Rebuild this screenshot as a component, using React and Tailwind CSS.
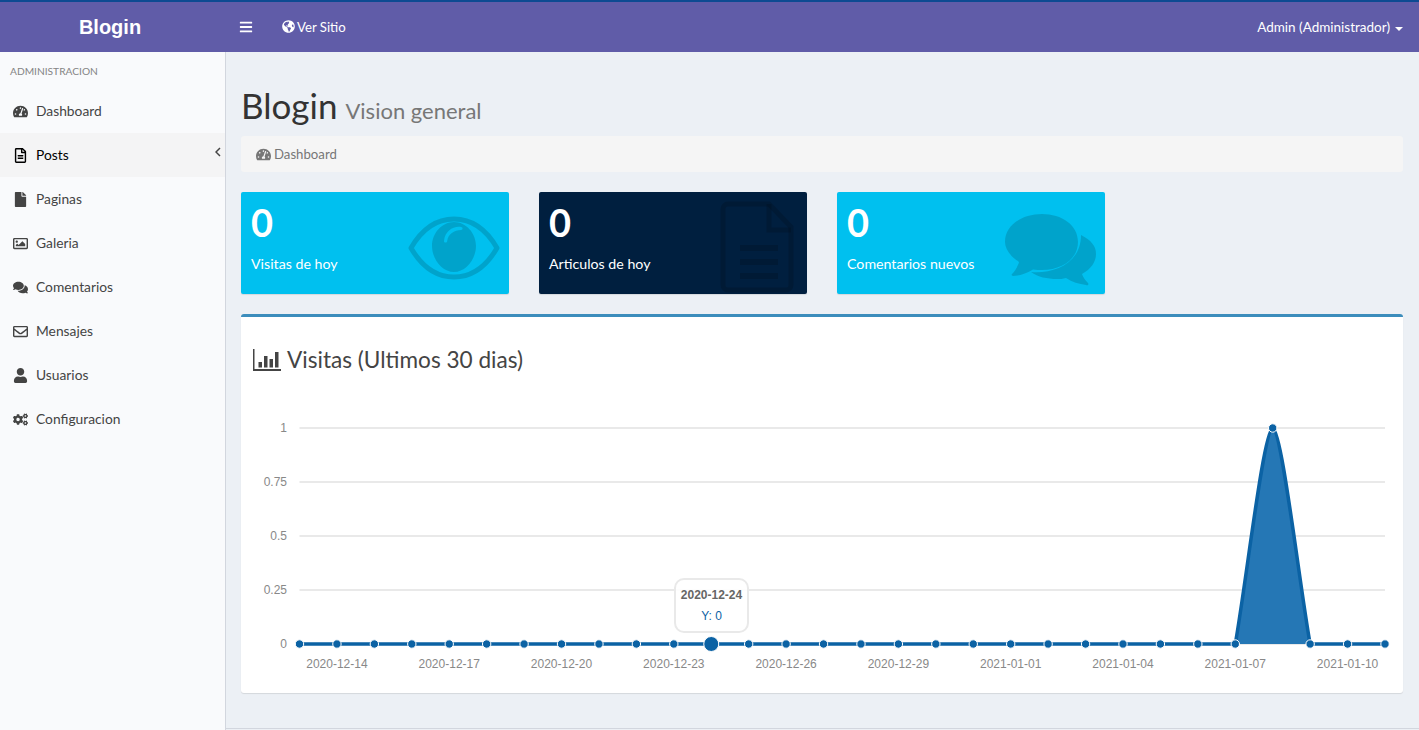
import React from "react";
import { FaTachometerAlt, FaRegFileAlt, FaFile, FaRegImage, FaComments, FaRegEnvelope, FaUser, FaCogs, FaGlobeAmericas, FaBars } from "react-icons/fa";

const nav = [
  ["Dashboard", FaTachometerAlt],
  ["Posts", FaRegFileAlt],
  ["Paginas", FaFile],
  ["Galeria", FaRegImage],
  ["Comentarios", FaComments],
  ["Mensajes", FaRegEnvelope],
  ["Usuarios", FaUser],
  ["Configuracion", FaCogs],
];

const EyeIcon = () => (
  <svg width="92" height="64" viewBox="0 0 92 64" className="absolute left-[167px] top-[24px]">
    <path d="M3 32C14 13 29 3 46 3s32 10 43 29C78 51 63 61 46 61S14 51 3 32Z" fill="none" stroke="#000" strokeOpacity=".15" strokeWidth="5" strokeLinejoin="round" />
    <path fillRule="evenodd" fill="#000" fillOpacity=".15" d="M46 6c12 0 22 11 22 24S58 56 46 56 24 43 24 30 34 6 46 6Zm7 5c-8-1-16 4-17 14-.2 2 3 2 3.200 0 .8-7 7-11 13.800-11 2 0 2-3 0-3Z" />
  </svg>
);
const DocIcon = () => (
  <svg width="74" height="92" viewBox="0 0 74 92" className="absolute left-[181px] top-[9px]" fill="none" stroke="#000" strokeOpacity=".15" strokeWidth="5">
    <path d="M49 3H8a5 5 0 0 0-5 5v76a5 5 0 0 0 5 5h58a5 5 0 0 0 5-5V26L49 3Z" />
    <path d="M49 3v26h22" />
    <path d="M20 47h38M20 61h38M20 75h38" strokeWidth="6" />
  </svg>
);
const ChatIcon = () => (
  <svg width="92" height="72" viewBox="0 0 92 72" className="absolute left-[168px] top-[22px]" fill="#000" fillOpacity=".15">
    <path d="M37 0c20 0 36 11 36 28S57 56 37 56c-3 0-6 0-9-.5C22 59 15 62 8 62c-1 0-2-1-1-2 3-3 6-8 7-12C5 42 0 35 0 28 0 11 17 0 37 0Z" />
    <path d="M76 21c10 5 15 11 15 19 0 8-5 15-14 20 1 3 3 6 6 9 1 1 0 3-2 2-7-1-14-3-20-7-3 1-6 1-9 1-10 0-19-2-26-7 22 2 50-8 50-37Z" />
  </svg>
);
const BarIcon = () => (
  <svg width="28" height="22" viewBox="0 0 28 22" fill="#444">
    <path d="M0 0h1.500v20H28v2H0Z" />
    <path d="M5.500 13h3.500v5.500H5.500ZM11 7h3.500v11.500H11ZM16.500 10h3.500v8.500h-3.500ZM22 3h3.500v15.500H22Z" />
  </svg>
);

const stats = [
  ["Visitas de hoy", "bg-[#00c0ef]", EyeIcon],
  ["Articulos de hoy", "bg-[#001f3f]", DocIcon],
  ["Comentarios nuevos", "bg-[#00c0ef]", ChatIcon],
];

const X0 = 58.5;
const STEP = 37.431;
const px = (i) => X0 + STEP * i;
const Y1 = 51;
const Y0 = 267;
const ticks = [["1", Y1], ["0.75", 105], ["0.5", 159], ["0.25", 213], ["0", Y0]];
const labels = [
  [1, "2020-12-14"], [4, "2020-12-17"], [7, "2020-12-20"], [10, "2020-12-23"], [13, "2020-12-26"],
  [16, "2020-12-29"], [19, "2021-01-01"], [22, "2021-01-04"], [25, "2021-01-07"], [28, "2021-01-10"],
];
const a = px(25), b = px(26), c = px(27);
const peak = `C${a + 11} ${Y0 - 62} ${b - 9} ${Y1 + 1} ${b} ${Y1}C${b + 9} ${Y1 + 1} ${c - 11} ${Y0 - 62} ${c} ${Y0}`;

function Chart() {
  return (
    <svg width="1162" height="316" viewBox="0 0 1162 316" className="block">
      <g style={{ fontFamily: '"Liberation Sans", sans-serif', fontSize: 12 }} fill="#888888">
        {ticks.map(([t, y]) => (
          <g key={t}>
            <line x1={X0} x2={1144} y1={y} y2={y} stroke="#e9e9e9" strokeWidth="2" />
            <text x={46} y={y + 4} textAnchor="end">{t}</text>
          </g>
        ))}
        {labels.map(([i, t]) => (
          <text key={t} x={px(i)} y={291} textAnchor="middle">{t}</text>
        ))}
      </g>
      <path d={`M${a} ${Y0}${peak}Z`} fill="#2577b5" />
      <path d={`M${X0} ${Y0}L${a} ${Y0}${peak}L${px(29)} ${Y0}`} fill="none" stroke="#0b62a4" strokeWidth="3.500" />
      {Array.from({ length: 30 }, (_, i) => (
        <circle key={i} cx={px(i)} cy={i === 26 ? Y1 : Y0} r={i === 11 ? 7.5 : 4.2} fill="#0b62a4" stroke="#fff" strokeWidth="1" />
      ))}
    </svg>
  );
}

export default function App() {
  const sans = { fontFamily: '"Lato", "Noto Sans", sans-serif' };
  return (
    <div className="h-[730px] w-full overflow-hidden bg-[#ecf0f5] flex flex-col" style={sans}>
      <header className="h-[52px] shrink-0 bg-[#605ca8] border-t-2 border-[#0d4a92] flex items-center text-white">
        <div className="w-[220px] text-center text-[20px] font-bold" style={{ fontFamily: '"Liberation Sans", sans-serif' }}>Blogin</div>
        <FaBars className="ml-[19px] text-[14px]" />
        <div className="ml-[29px] flex items-center gap-[2px] text-[13.2px]">
          <FaGlobeAmericas className="text-[13px]" />
          <span className="pt-[1px]">Ver Sitio</span>
        </div>
        <div className="ml-auto mr-4 flex items-center gap-[5px] text-[13.500px]">
          <span>Admin (Administrador)</span>
          <span className="w-0 h-0 border-x-[4px] border-x-transparent border-t-[4px] border-t-white mt-[3px]" />
        </div>
      </header>
      <div className="flex-1 flex min-h-0">
        <aside className="w-[226px] shrink-0 bg-[#f9fafc] border-r border-[#d2d6de]">
          <div className="h-[37px] pl-[10px] pt-[12px] text-[10.200px] leading-[14px] text-[#848484]">ADMINISTRACION</div>
          <nav>
            {nav.map(([label, Icon]) => {
              const active = label === "Posts";
              return (
                <div key={label} className={`h-[44px] flex items-center relative pl-[13px] text-[13.800px] ${active ? "bg-[#f4f4f5] text-black" : "text-[#444444]"}`}>
                  <span className="w-[23px] flex"><Icon className="text-[15px]" /></span>
                  <span>{label}</span>
                  {active && (
                    <svg width="6" height="10" viewBox="0 0 6 10" className="absolute left-[215px] top-[14px]" fill="none" stroke="#444" strokeWidth="1.500">
                      <path d="M5 1 1 5l4 4" />
                    </svg>
                  )}
                </div>
              );
            })}
          </nav>
        </aside>
        <main className="flex-1 min-w-0 pl-[15px] pr-[16px] pt-[31px] border-b border-[#d2d6de] mb-[1px]">
          <h1 className="h-[53px] flex items-baseline text-[35px] leading-[44px] text-[#333333]">
            Blogin
            <small className="ml-2 text-[22px] text-[#777777]">Vision general</small>
          </h1>
          <div className="h-[36px] bg-[#f5f5f5] rounded-[3px] flex items-center pl-[15px] gap-[3px] text-[13.200px] text-[#777777]">
            <FaTachometerAlt className="text-[15px]" />
            <span className="pt-[1px]">Dashboard</span>
          </div>
          <div className="mt-[20px] flex gap-[30px]">
            {stats.map(([label, bg, Icon]) => (
              <div key={label} className={`relative w-[268px] h-[102px] rounded-[2px] text-white pl-[10px] pt-[9px] shadow-[0_1px_1px_rgba(0,0,0,0.1)] ${bg}`}>
                <div className="text-[38px] leading-[42px] font-bold">0</div>
                <div className="mt-[11px] text-[14.200px] leading-[20px]">{label}</div>
                <Icon />
              </div>
            ))}
          </div>
          <section className="relative mt-[20px] h-[379px] bg-white rounded-[3px] border-t-[3px] border-[#3c8dbc] shadow-[0_1px_1px_rgba(0,0,0,0.1)]">
            <div className="pt-[28px] pb-[3px] flex items-center gap-[6px] pl-[12px] text-[#444444] text-[22.600px] leading-[29px]">
              <BarIcon />
              <span>Visitas (Ultimos 30 dias)</span>
            </div>
            <Chart />
            <div className="absolute left-[433px] top-[261px] w-[75px] h-[55px] bg-white/90 border-2 border-[#e9e9e9] rounded-[10px] text-center text-[12px] leading-[21px] pt-[5px]" style={{ fontFamily: '"Liberation Sans", sans-serif' }}>
              <div className="font-bold text-[#666666]">2020-12-24</div>
              <div className="text-[#0b62a4]">Y: 0</div>
            </div>
          </section>
        </main>
      </div>
    </div>
  );
}
